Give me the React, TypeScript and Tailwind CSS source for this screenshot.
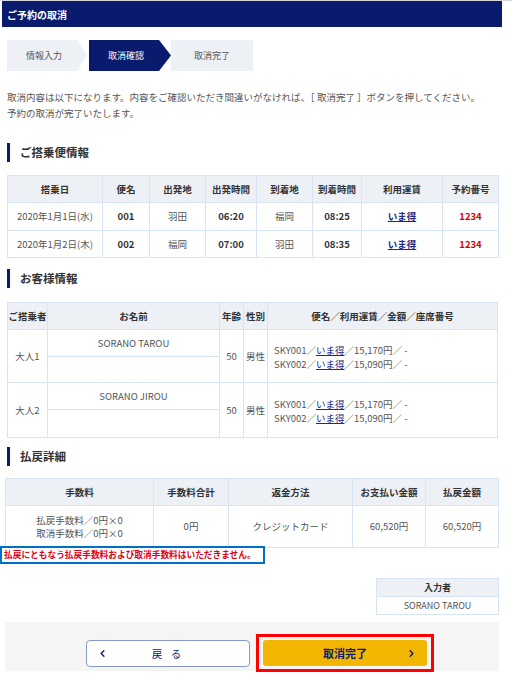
import { ChevronLeft, ChevronRight } from 'lucide-react'

const navy = 'bg-[#0a1a6c]'

const flights = [
  { date: '2020年1月1日(水)', no: '001', from: '羽田', dep: '06:20', to: '福岡', arr: '08:25' },
  { date: '2020年1月2日(木)', no: '002', from: '福岡', dep: '07:00', to: '羽田', arr: '08:35' },
]

const passengers = [
  { label: '大人1', name: 'SORANO TAROU' },
  { label: '大人2', name: 'SORANO JIROU' },
]

function SectionTitle({ children }: { children: React.ReactNode }) {
  return (
    <div className="ml-[2px] flex h-[19px] items-center">
      <span className={`h-[19px] w-[3px] ${navy}`} />
      <span className="ml-[10px] text-[11.5px] font-bold text-[#333]">{children}</span>
    </div>
  )
}

function Cell({
  children,
  head,
  className = '',
}: {
  children?: React.ReactNode
  head?: boolean
  className?: string
}) {
  return (
    <div
      className={`flex items-center justify-center text-center ${
        head ? 'bg-[#edf1f6] font-bold text-[#333]' : 'bg-white text-[#555]'
      } ${className}`}
    >
      {children}
    </div>
  )
}

function Fare({ bold }: { bold?: boolean }) {
  return (
    <span className={`text-[#1b2b85] underline ${bold ? 'font-bold' : ''}`}>いま得</span>
  )
}

export default function App() {
  return (
    <div className="min-h-[677px] w-[512px] bg-white font-['Noto_Sans_CJK_JP','Noto_Sans',sans-serif] text-[9.5px] text-[#555]">
      <div className="h-[1px] bg-[#d4d6de]" />
      <div className={`ml-[2px] flex h-[26px] w-[500px] items-center pl-[5px] ${navy}`}>
        <span className="text-[10px] font-bold text-white">ご予約の取消</span>
      </div>

      <div className="ml-[5px] w-[495px]">
        {/* steps */}
        <div className="mt-[13px] ml-[2px] flex h-[31px] text-[9px]">
          <div className="flex w-[80px] items-center justify-center bg-[#edf0f5] pr-[6px] text-[#555] [clip-path:polygon(0_0,calc(100%_-_10px)_0,100%_50%,calc(100%_-_10px)_100%,0_100%)]">
            情報入力
          </div>
          <div
            className={`ml-[2px] flex w-[82px] items-center justify-center pr-[8px] text-white ${navy} [clip-path:polygon(0_0,calc(100%_-_12px)_0,100%_50%,calc(100%_-_12px)_100%,0_100%)]`}
          >
            取消確認
          </div>
          <div className="flex w-[82px] items-center justify-center bg-[#edf0f5] text-[#555]">
            取消完了
          </div>
        </div>

        {/* intro */}
        <div className="mt-[18px] ml-[2px] leading-[16px]">
          <p>取消内容は以下になります。内容をご確認いただき間違いがなければ、［ 取消完了 ］ボタンを押してください。</p>
          <p>予約の取消が完了いたします。</p>
        </div>

        {/* flights */}
        <div className="mt-[22px]">
          <SectionTitle>ご搭乗便情報</SectionTitle>
        </div>
        <div className="mt-[13px] ml-[2px] grid w-[492px] grid-cols-[94px_46px_55px_50px_55px_48px_80px_1fr] grid-rows-[26px_27px_26px] gap-[1px] border border-[#d7e4f3] bg-[#d7e4f3]">
          {['搭乗日', '便名', '出発地', '出発時間', '到着地', '到着時間', '利用運賃', '予約番号'].map((h) => (
            <Cell key={h} head>
              {h}
            </Cell>
          ))}
          {flights.map((f) => (
            <div key={f.no} className="contents">
              <Cell>{f.date}</Cell>
              <Cell className="font-bold !text-[#333]">{f.no}</Cell>
              <Cell>{f.from}</Cell>
              <Cell className="font-bold !text-[#333]">{f.dep}</Cell>
              <Cell>{f.to}</Cell>
              <Cell className="font-bold !text-[#333]">{f.arr}</Cell>
              <Cell>
                <Fare bold />
              </Cell>
              <Cell className="font-bold !text-[#d40000]">1234</Cell>
            </div>
          ))}
        </div>

        {/* passengers */}
        <div className="mt-[11px]">
          <SectionTitle>お客様情報</SectionTitle>
        </div>
        <div className="mt-[14px] ml-[2px] grid w-[491px] grid-cols-[39px_171px_23px_23px_1fr] grid-rows-[26px_26px_25px_26px_27px] gap-[1px] border border-[#d7e4f3] bg-[#d7e4f3]">
          <Cell head>ご搭乗者</Cell>
          <Cell head>お名前</Cell>
          <Cell head>年齢</Cell>
          <Cell head>性別</Cell>
          <Cell head>便名／利用運賃／金額／座席番号</Cell>
          {passengers.map((p) => (
            <div key={p.label} className="contents">
              <Cell className="row-span-2">{p.label}</Cell>
              <Cell>{p.name}</Cell>
              <Cell className="row-span-2">50</Cell>
              <Cell className="row-span-2">男性</Cell>
              <div className="row-span-2 flex flex-col justify-center bg-white pl-[6px] pt-[1px] leading-[14px]">
                <span>
                  SKY001／<Fare />／15,170円／ -
                </span>
                <span>
                  SKY002／<Fare />／15,090円／ -
                </span>
              </div>
              <Cell />
            </div>
          ))}
        </div>

        {/* refund */}
        <div className="mt-[9px]">
          <SectionTitle>払戻詳細</SectionTitle>
        </div>
        <div className="mt-[12px] grid w-[494px] grid-cols-[147px_74px_123px_72px_1fr] grid-rows-[26px_41px] gap-[1px] border border-[#d7e4f3] bg-[#d7e4f3]">
          {['手数料', '手数料合計', '返金方法', 'お支払い金額', '払戻金額'].map((h) => (
            <Cell key={h} head>
              {h}
            </Cell>
          ))}
          <Cell className="flex-col leading-[13px]">
            <span>払戻手数料／0円×0</span>
            <span>取消手数料／0円×0</span>
          </Cell>
          <Cell>0円</Cell>
          <Cell>クレジットカード</Cell>
          <Cell>60,520円</Cell>
          <Cell>60,520円</Cell>
        </div>
        <div className="relative -mt-[2px] -ml-[5px] flex h-[18px] w-[265px] items-center border-2 border-[#0070c0] bg-white pl-[2px] text-[8.7px] font-bold text-[#e00012]">
          払戻にともなう払戻手数料および取消手数料はいただきません。
        </div>

        {/* entered by */}
        <div className="mt-[14px] mr-[1px] ml-auto grid w-[123px] grid-rows-[17px_17px] gap-[1px] border border-[#d7e4f3] bg-[#d7e4f3] text-[9px]">
          <Cell head>入力者</Cell>
          <Cell>SORANO TAROU</Cell>
        </div>

        {/* footer buttons */}
        <div className="mt-[7px] flex h-[49px] w-[494px] items-start bg-[#f5f5f5] pt-[12px] pl-[81px]">
          <button className="relative mt-[6px] flex h-[27px] w-[164px] items-center justify-center rounded-[4px] border-[1.5px] border-[#8a97c9] bg-white text-[10.5px] text-[#0a1a6c]">
            <ChevronLeft className="absolute left-[10px]" size={11} strokeWidth={3} />
            <span className="tracking-[3px]">戻 る</span>
          </button>
          <div className="ml-[6px] flex h-[38px] w-[178px] items-center justify-center border-[3px] border-[#ff0000]">
            <button className="relative flex h-[26px] w-[164px] items-center justify-center rounded-[3px] bg-[#f2b600] text-[11px] font-bold text-[#0a1a6c]">
              取消完了
              <ChevronRight className="absolute right-[10px]" size={11} strokeWidth={3} />
            </button>
          </div>
        </div>
      </div>
    </div>
  )
}
